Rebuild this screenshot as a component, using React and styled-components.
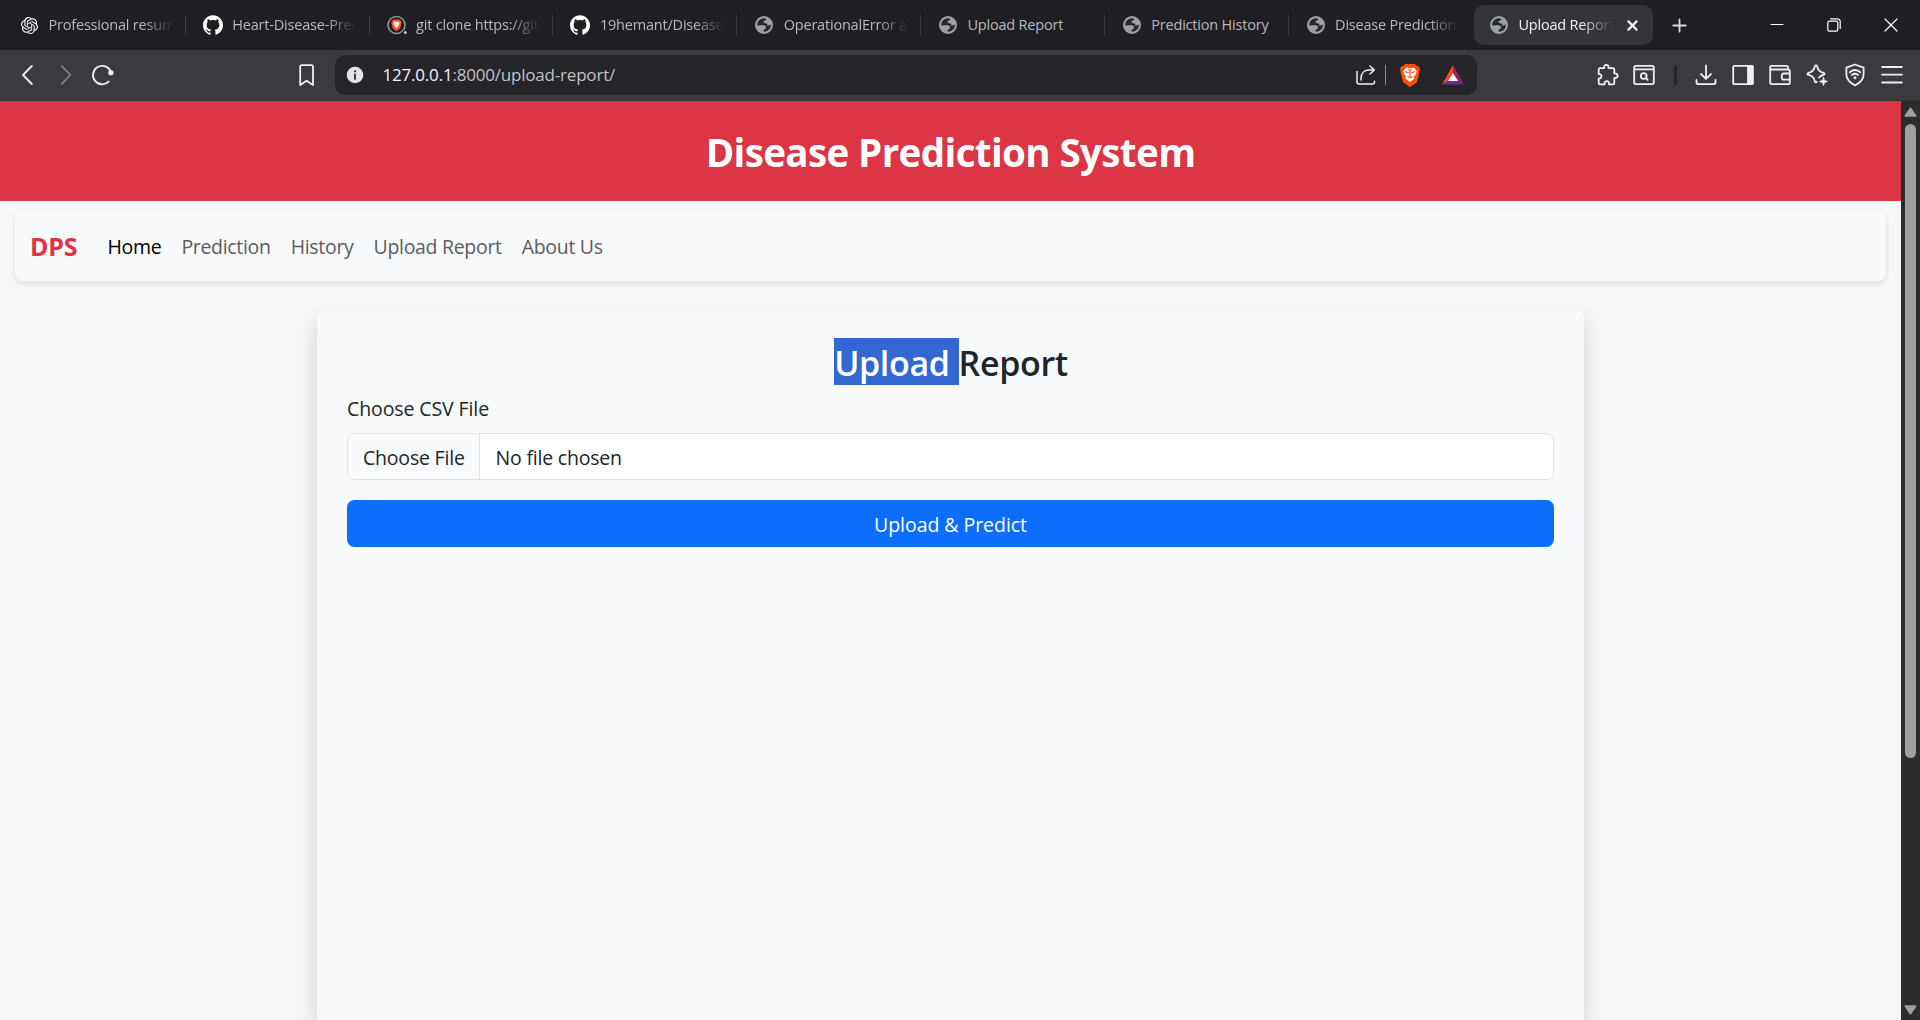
import React from "react";
import styled, { createGlobalStyle } from "styled-components";
import { SiOpenai, SiGithub } from "react-icons/si";

const GlobalStyle = createGlobalStyle`
  * { box-sizing: border-box; }
  body { margin: 0; overflow: hidden; font-family: "Open Sans", "Noto Sans", sans-serif; }
`;

const Window = styled.div`
  display: flex;
  flex-direction: column;
  width: 1920px;
  height: 1020px;
  overflow: hidden;
  background: #f4f6f8;
`;

/* Tab strip */
const TabStrip = styled.div`
  display: flex;
  align-items: center;
  flex: none;
  height: 50px;
  padding-left: 2px;
  background: #1f1e23;
`;

const Tab = styled.div`
  display: flex;
  align-items: center;
  flex: none;
  width: ${(p) => (p.$active ? 179 : 183.8)}px;
  height: ${(p) => (p.$active ? 40 : 20)}px;
  margin-left: ${(p) => (p.$active ? 1.6 : 0)}px;
  padding-left: ${(p) => (p.$active ? 15 : 17)}px;
  border-radius: ${(p) => (p.$active ? 10 : 0)}px;
  background: ${(p) => (p.$active ? "#353439" : "transparent")};
  border-right: ${(p) => (p.$active || p.$last ? "0" : "1px solid #3d3c42")};
  color: ${(p) => (p.$active ? "#f0eff4" : "#b9b8bd")};
`;

const TabIcon = styled.span`
  display: flex;
  align-items: center;
  justify-content: center;
  width: 20px;
  height: 20px;
  color: #fff;
`;

const TabTitle = styled.span`
  width: ${(p) => (p.$active ? 94 : 124)}px;
  margin-left: 9.5px;
  overflow: hidden;
  white-space: nowrap;
  font-size: 14.5px;
  line-height: 20px;
  letter-spacing: -0.2px;
  mask-image: ${(p) => (p.$fade ? "linear-gradient(90deg, #000 calc(100% - 30px), transparent)" : "none")};
`;

const TabClose = styled.span`
  display: flex;
  margin-left: 14.5px;
`;

const NewTab = styled.div`
  display: flex;
  margin-left: 19px;
  color: #d8d7dc;
`;

const WindowControls = styled.div`
  display: flex;
  align-items: center;
  gap: 43px;
  margin-left: auto;
  padding-right: 22px;
  color: #fff;
`;

/* Toolbar */
const Toolbar = styled.div`
  display: flex;
  align-items: center;
  flex: none;
  height: 51px;
  background: #3b3a3f;
  border-bottom: 1px solid #2f2e33;
  color: #efeef3;
`;

const NavButtons = styled.div`
  display: flex;
  align-items: center;
  gap: 13.5px;
  width: 295px;
  padding-left: 16px;
`;

const Bookmark = styled.div`
  display: flex;
  width: 40px;
`;

const AddressBar = styled.div`
  display: flex;
  align-items: center;
  width: 1142px;
  height: 40px;
  padding: 0 12px 0 11px;
  border-radius: 10px;
  background: #252429;
`;

const Url = styled.div`
  flex: 1;
  margin-left: 18.5px;
  font-size: 17px;
  line-height: 24px;
  letter-spacing: -0.2px;
  color: #c2c1c6;
`;

const Host = styled.span`
  color: #f5f4f9;
`;

const AddressActions = styled.div`
  display: flex;
  align-items: center;
`;

const AddressDivider = styled.span`
  width: 1px;
  height: 20px;
  margin: 0 14px 0 9.5px;
  background: #8b8a8f;
`;

const Bat = styled.span`
  display: flex;
  margin-left: 22px;
`;

const Extensions = styled.div`
  display: flex;
  align-items: center;
  gap: 13.3px;
  margin-left: auto;
  padding-right: 16px;
`;

const ToolDivider = styled.span`
  width: 3px;
  height: 20px;
  margin: 0 3.5px 0 4px;
  border-radius: 2px;
  background: #252429;
`;

/* Page */
const Viewport = styled.div`
  display: flex;
  flex: 1;
  min-height: 0;
`;

const Page = styled.div`
  display: flex;
  flex-direction: column;
  width: 1901px;
  overflow: hidden;
`;

const Header = styled.header`
  flex: none;
  height: 100px;
  padding-top: 21px;
  background: #dc3545;
`;

const SiteTitle = styled.h1`
  margin: 0;
  text-align: center;
  color: #fff;
  font-size: 38.5px;
  font-weight: 700;
  line-height: 60px;
  letter-spacing: -0.6px;
`;

const Navbar = styled.nav`
  display: flex;
  align-items: center;
  flex: none;
  height: 70px;
  margin: 10px 15px 0;
  padding-left: 15px;
  border-radius: 7.5px;
  background: #f8f9fb;
  box-shadow: 0 2.5px 5px rgba(0, 0, 0, 0.075), 0 2px 8px rgba(0, 0, 0, 0.02);
`;

const Brand = styled.span`
  width: 67.5px;
  color: #dc3545;
  font-size: 25px;
  font-weight: 700;
  letter-spacing: -0.2px;
`;

const NavLink = styled.a`
  padding: 2px 10px 0;
  color: ${(p) => (p.$active ? "#000" : "#5b5c5d")};
  font-size: 19.5px;
  line-height: 30px;
  letter-spacing: -0.31px;
`;

const Card = styled.main`
  flex: 1;
  width: 1267px;
  margin: 30px 0 0 317px;
  padding: 30px;
  border-radius: 7.5px 7.5px 0 0;
  background: #f8f9fb;
  box-shadow: 0 10px 20px rgba(0, 0, 0, 0.15);
  color: #212529;
`;

const Heading = styled.h2`
  height: 42px;
  margin: 0 0 10px;
  padding: 1px 0 0 1px;
  text-align: center;
  font-size: 34px;
  font-weight: 600;
  line-height: 42px;
  letter-spacing: -0.35px;
`;

const Selected = styled.span`
  padding: 2px 0.5px 0 0;
  background: linear-gradient(#3367d1, #3367d1) 0 0 / 100% 47px no-repeat;
  color: #fff;
`;

const Label = styled.label`
  display: block;
  height: 30px;
  margin-bottom: 10px;
  padding-top: 1px;
  font-size: 19.5px;
  line-height: 30px;
  letter-spacing: -0.1px;
`;

const FileField = styled.div`
  display: flex;
  height: 47px;
  margin-bottom: 20px;
  overflow: hidden;
  border: 1px solid #dee2e6;
  border-radius: 7.5px;
  background: #fff;
  font-size: 19.5px;
  line-height: 47px;
`;

const FileButton = styled.span`
  width: 132px;
  padding-left: 15px;
  border-right: 1px solid #dee2e6;
  background: #f8f9fb;
  letter-spacing: -0.2px;
`;

const FileName = styled.span`
  padding-left: 15.5px;
  letter-spacing: -0.2px;
`;

const SubmitButton = styled.button`
  display: block;
  width: 100%;
  height: 47px;
  padding: 2px 0 0;
  border: 0;
  border-radius: 7.5px;
  background: #0d6efd;
  color: #fff;
  font: 400 19.5px/30px "Open Sans", sans-serif;
  letter-spacing: -0.05px;
`;

const Scrollbar = styled.div`
  display: flex;
  flex-direction: column;
  align-items: center;
  width: 19px;
  padding: 6px 0 5px;
  background: #2c2c2c;
`;

const Thumb = styled.div`
  width: 11px;
  height: 634px;
  margin: 7px 0 auto;
  border-radius: 6px;
  background: #9f9f9f;
`;

/* Icons */
const Svg = styled.svg`
  display: block;
  flex: none;
  overflow: visible;
  color: ${(p) => p.$color || "inherit"};
  fill: none;
  stroke: currentColor;
  stroke-width: ${(p) => p.$stroke || 1.8};
  stroke-linecap: round;
  stroke-linejoin: round;
`;

const Icon = ({ w = 21, h = 21, stroke, color, children }) => (
  <Svg width={w} height={h} viewBox={`0 0 ${w} ${h}`} $stroke={stroke} $color={color}>{children}</Svg>
);

const Globe = () => (
  <Icon w={18} h={18}>
    <circle cx="9" cy="9" r="9" fill="#9aa0a6" stroke="none" />
    <path d="M2.2 9.2C2.4 5.2 5.2 2.5 8.8 2.2c1.2.1 2 .5 2.4 1-.2 1.3-1.8 1.3-2.5 1.8-.7.6-.2 1.5.5 1.9 1.2.5 2.7.1 3.2 1.3.4 1-.5 1.8-1.7 1.7-1.5-.1-2-1-3.5-.9-1.4.1-2.1.7-5 .2z" fill="#27262b" stroke="none" />
    <path d="M15.8 8.5c.2 4-2.8 7-6.6 7.3-.6-.2-.8-1-.5-1.7.4-.8 1.5-.9 2-1.6.5-.8-.3-1.4.3-2.1.8-.9 1.9-.3 2.8-.8.7-.3 1.1-.9 2-1.1z" fill="#27262b" stroke="none" />
  </Icon>
);

const BraveBadge = () => (
  <Icon w={20} h={20} stroke={1.7}>
    <circle cx="9.5" cy="10" r="8.5" stroke="#8d9095" />
    <path d="M6.5 4.6h6l2.2 2.4-1.4 6.2-3.8 3L5.7 13.2 4.3 7z" fill="#fb542b" stroke="none" />
    <path d="M7 6.8h5l.5 2-1.6 3-1.4 1.4-1.4-1.4-1.6-3z" fill="#ffe9e2" stroke="none" />
    <circle cx="18" cy="17.5" r="2.4" fill="#1f1e23" stroke="none" />
    <circle cx="18.3" cy="17.5" r="1.5" fill="#c9c9ce" stroke="none" />
  </Icon>
);

const favicons = {
  openai: <SiOpenai size={17} />,
  github: <SiGithub size={20} />,
  brave: <BraveBadge />,
  globe: <Globe />,
};

const tabs = [
  { icon: "openai", title: "Professional resume", fade: true },
  { icon: "github", title: "Heart-Disease-Pred", fade: true },
  { icon: "brave", title: "git clone https://git", fade: true },
  { icon: "github", title: "19hemant/Disease-", fade: true },
  { icon: "globe", title: "OperationalError at", fade: true },
  { icon: "globe", title: "Upload Report" },
  { icon: "globe", title: "Prediction History" },
  { icon: "globe", title: "Disease Prediction", fade: true },
];

const links = ["Home", "Prediction", "History", "Upload Report", "About Us"];

export default function App() {
  return (
    <Window>
      <GlobalStyle />
      <TabStrip>
        {tabs.map((t, i) => (
          <Tab key={i} $last={i === tabs.length - 1}>
            <TabIcon>{favicons[t.icon]}</TabIcon>
            <TabTitle $fade={t.fade}>{t.title}</TabTitle>
          </Tab>
        ))}
        <Tab $active>
          <TabIcon>{favicons.globe}</TabIcon>
          <TabTitle $active $fade>Upload Report</TabTitle>
          <TabClose>
            <Icon w={11} h={11} stroke={2.2}><path d="M1.4 1.4l8.2 8.2M9.6 1.4L1.4 9.6" /></Icon>
          </TabClose>
        </Tab>
        <NewTab>
          <Icon w={15} h={15}><path d="M7.5 1.3v12.4M1.3 7.5h12.4" /></Icon>
        </NewTab>
        <WindowControls>
          <Icon w={14} h={14} stroke={1.2}><path d="M1 6.5h12" /></Icon>
          <Icon w={14} h={14} stroke={1.2}>
            <rect x=".8" y="3.2" width="10" height="10" rx="1.6" />
            <path d="M3.6 .8h6.8a2.8 2.8 0 0 1 2.8 2.8v6.8" />
          </Icon>
          <Icon w={14} h={14} stroke={1.2}><path d="M1 1l12 12M13 1L1 13" /></Icon>
        </WindowControls>
      </TabStrip>

      <Toolbar>
        <NavButtons>
          <Icon w={24} h={24}><path d="M15.8 3L7 12l8.8 9" /></Icon>
          <Icon w={24} h={24} color="#7c7b80"><path d="M7.6 3l8.8 9-8.8 9" /></Icon>
          <Icon w={24} h={24}>
            <path d="M17.7 18.6a9.2 9.2 0 1 1 1.7-10.7" />
            <circle cx="19.9" cy="9.7" r="2.6" fill="currentColor" stroke="none" />
          </Icon>
        </NavButtons>
        <Bookmark>
          <Icon w={24} h={24}><path d="M6.8 2.2h9.6a1.6 1.6 0 0 1 1.6 1.6V22l-6.4-4.2L5.2 22V3.8a1.6 1.6 0 0 1 1.6-1.6z" /></Icon>
        </Bookmark>
        <AddressBar>
          <Icon w={18} h={18}>
            <circle cx="9" cy="9" r="8.3" fill="#e4e3e8" stroke="none" />
            <path d="M9 8.3v4.6" stroke="#252429" />
            <circle cx="9" cy="5.3" r="1.1" fill="#252429" stroke="none" />
          </Icon>
          <Url><Host>127.0.0.1</Host>:8000/upload-report/</Url>
          <AddressActions>
            <Icon w={20} h={20} stroke={1.5}>
              <path d="M1 6.5V17a2 2 0 0 0 2 2h13.5a2 2 0 0 0 2-2v-.7M5 15V13.5C5 8 8.5 5 13 5h5M14 1l4.3 4L14 9" />
            </Icon>
            <AddressDivider />
            <Icon w={20} h={23}>
              <path d="M5.2 0h9.6l2 2.2 1.8-.3L20 5l-.7 2 .2 1-2.6 10.2L10 23l-6.9-4.8L.5 8l.2-1L0 5l1.4-3.1 1.8.3z" fill="#fb4f0a" stroke="none" />
              <path d="M6.3 3.6l3.7.8 3.7-.8 3 3.4-.7 3.2-2.1 2.3.6 2-1.6 1.2-2.9 2.2-2.9-2.2-1.6-1.2.6-2L4 10.2 3.3 7z" fill="#fff" stroke="none" />
              <path d="M5.3 7.8l3 .8M14.7 7.8l-3 .8M10 6.5v5.8M7.8 12.8l2.2 1 2.2-1M8.3 5.6l1.7 1 1.7-1" stroke="#fb4f0a" strokeWidth="1.1" />
            </Icon>
            <Bat>
              <Icon w={23} h={22}>
                <path d="M11 1v8.5L5 18.5l-5 2z" fill="#ff4724" stroke="none" />
                <path d="M11 1l11 19.5-5-2-6-9z" fill="#9e1f63" stroke="none" />
                <path d="M0 20.5h22l-5-3.5H5z" fill="#662d91" stroke="none" />
                <path d="M11 9l5 8H6z" fill="#fff" stroke="none" />
              </Icon>
            </Bat>
          </AddressActions>
        </AddressBar>
        <Extensions>
          <Icon w={24} h={24}>
            <path d="M5 5.2h4.2C8.7 2.9 10 1.9 11.3 1.9s2.7 1 2.2 3.3H18a1.3 1.3 0 0 1 1.3 1.3v4c2.2-.4 3.3.9 3.3 2.2s-1.1 2.7-3.3 2.3v5a1.3 1.3 0 0 1-1.3 1.3h-4c.4-2.2-.8-3.2-2.2-3.2s-2.6 1-2.2 3.2H5a1.3 1.3 0 0 1-1.3-1.3v-4.5c1.8.1 2.8-.8 2.8-2.2s-1-2.5-2.8-2.2V6.5A1.3 1.3 0 0 1 5 5.2z" />
          </Icon>
          <Icon w={24} h={24}>
            <rect x="2.2" y="2.8" width="19.6" height="18.4" rx="1.6" />
            <path d="M2.2 6.4h19.6" />
            <circle cx="11.7" cy="13" r="2.9" /><path d="M14 15.2l1.7 1.7" />
          </Icon>
          <ToolDivider />
          <Icon w={24} h={24}><path d="M12 2.5v13M7 11l5 4.8 5-4.8M2.5 17v2.2a2 2 0 0 0 2 2h15a2 2 0 0 0 2-2V17" /></Icon>
          <Icon w={24} h={24}>
            <rect x="2.2" y="2.8" width="19.6" height="18.4" rx="1.3" />
            <path d="M17 3.2h4.5v17.6H17z" fill="currentColor" />
          </Icon>
          <Icon w={24} h={24}>
            <path d="M20 6.5V4.3a1.5 1.5 0 0 0-1.5-1.5h-15a1.3 1.3 0 0 0-1.3 1.6v15.3a1.5 1.5 0 0 0 1.5 1.5h16.6a1.5 1.5 0 0 0 1.5-1.5V8a1.5 1.5 0 0 0-1.5-1.5H2.8" />
            <path d="M21.8 10.5h-6a2 2 0 0 0-2 2v2.2a2 2 0 0 0 2 2h6" />
          </Icon>
          <Icon w={24} h={24}>
            <path d="M11 2.2c.5 0 .8.3 1 .9 1.1 4.2 2.3 5.6 7 7 .8.3.8 1.3 0 1.6-2.6.8-4 1.6-5 2.8M11 2.2c-.5 0-.8.3-1 .9-1.1 4.2-2.3 5.6-7 7-.8.3-.8 1.3 0 1.6 4.7 1.4 5.9 2.8 7 7 .3.9 1.3.9 1.7.1" />
            <path d="M18.5 14.5l1 3 3 1-3 1-1 3-1-3-3-1 3-1z" fill="currentColor" strokeWidth=".8" />
          </Icon>
          <Icon w={24} h={24}>
            <path d="M12 1.5l8.6 3.1v7c0 5-3.6 8.3-8.6 10.9-5-2.6-8.6-5.9-8.6-10.9v-7z" />
            <path d="M6.8 9.2c3.2-2.7 7.2-2.7 10.4 0M8.9 12c2-1.6 4.2-1.6 6.2 0" />
            <circle cx="12" cy="14.8" r="1.5" fill="currentColor" stroke="none" />
          </Icon>
          <Icon w={24} h={24}><path d="M2.2 4h19.6M2.2 11.7h19.6M2.2 19.5h19.6" /></Icon>
        </Extensions>
      </Toolbar>

      <Viewport>
        <Page>
          <Header><SiteTitle>Disease Prediction System</SiteTitle></Header>
          <Navbar>
            <Brand>DPS</Brand>
            {links.map((l, i) => <NavLink key={l} $active={i === 0}>{l}</NavLink>)}
          </Navbar>
          <Card>
            <Heading><Selected>Upload </Selected>Report</Heading>
            <Label>Choose CSV File</Label>
            <FileField>
              <FileButton>Choose File</FileButton>
              <FileName>No file chosen</FileName>
            </FileField>
            <SubmitButton>Upload &amp; Predict</SubmitButton>
          </Card>
        </Page>
        <Scrollbar>
          <Icon w={13} h={10}><path d="M6.5 1.2L11.8 9H1.2z" fill="#9f9f9f" stroke="#9f9f9f" strokeWidth="1.5" /></Icon>
          <Thumb />
          <Icon w={13} h={10}><path d="M6.5 8.8L11.8 1H1.2z" fill="#9f9f9f" stroke="#9f9f9f" strokeWidth="1.5" /></Icon>
        </Scrollbar>
      </Viewport>
    </Window>
  );
}
